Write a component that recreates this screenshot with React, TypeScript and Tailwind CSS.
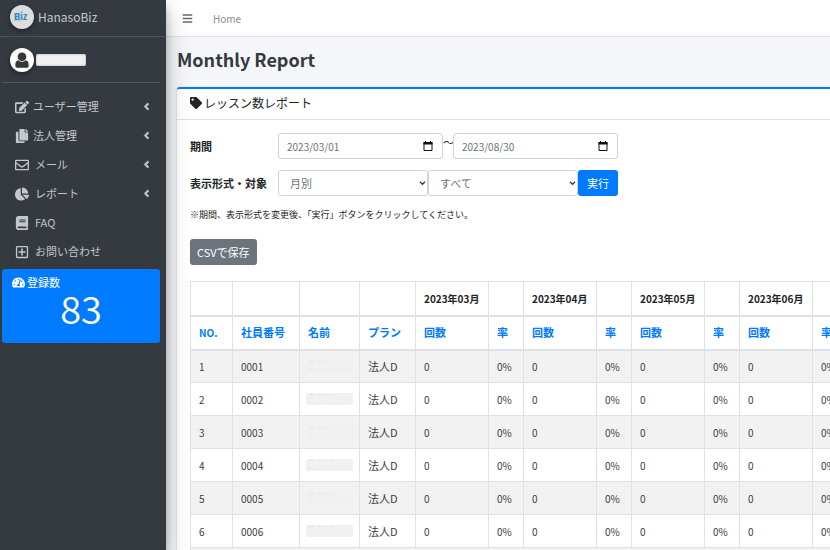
import type { IconType } from 'react-icons';
import {
  FaAngleLeft,
  FaBars,
  FaBook,
  FaChartPie,
  FaCopy,
  FaEdit,
  FaRegEnvelope,
  FaRegPlusSquare,
  FaTachometerAlt,
  FaTag,
} from 'react-icons/fa';

type NavItem = {
  label: string;
  icon: IconType;
  wide?: boolean;
  children?: boolean;
};

const navItems: NavItem[] = [
  { label: 'ユーザー管理', icon: FaEdit, children: true },
  { label: '法人管理', icon: FaCopy, children: true },
  { label: 'メール', icon: FaRegEnvelope, wide: true, children: true },
  { label: 'レポート', icon: FaChartPie, wide: true, children: true },
  { label: 'FAQ', icon: FaBook, wide: true },
  { label: 'お問い合わせ', icon: FaRegPlusSquare, wide: true },
];

const months = ['2023年03月', '2023年04月', '2023年05月', '2023年06月'];
const rows = ['0001', '0002', '0003', '0004', '0005', '0006'];

function Sidebar() {
  return (
    <aside className="relative z-10 flex w-[166px] shrink-0 flex-col bg-[#343a40] text-[11px] text-[#c2c7d0] shadow-[0_11px_23px_rgba(0,0,0,0.25),0_8px_8px_rgba(0,0,0,0.22)]">
      <a href="#" className="flex h-[37px] items-center gap-1 border-b border-[#4b545c] pb-[3px] pl-[10px] text-[12px]">
        <span className="flex size-6 items-center justify-center rounded-full bg-[#dcdddf] shadow-[0_2px_5px_rgba(0,0,0,0.4)]">
          <svg viewBox="0 0 24 24" className="size-6" aria-hidden>
            <rect x="4" y="8" width="7" height="8" fill="#a9cde8" />
            <text x="4" y="15" fontSize="9" fontWeight="700" fill="#3f83b8">
              Biz
            </text>
          </svg>
        </span>
        <span>HanasoBiz</span>
      </a>
      <div className="mr-[6px] ml-[2px] flex h-[46px] items-center gap-[2px] border-b border-[#4f5962] pl-2">
        <span className="flex size-6 items-center justify-center rounded-full bg-white shadow-[0_2px_5px_rgba(0,0,0,0.4)]">
          <svg viewBox="0 0 24 24" className="size-6" fill="#343638" aria-hidden>
            <path d="M8.2 12.3h7.6c1.8.6 2.8 2 2.8 4v1.8c0 1-.6 1.6-1.6 1.6H7c-1 0-1.6-.6-1.6-1.6v-1.8c0-2 1-3.4 2.8-4z" />
            <circle cx="12" cy="8.8" r="4.700" stroke="#fff" strokeWidth="0.8" />
          </svg>
        </span>
        <span className="h-3 w-[50px] rounded-[2px] bg-[#f0f0f0] shadow-[inset_0_0_2px_#999]" />
      </div>
      <nav className="pt-[9px]">
        <ul>
          {navItems.map(({ label, icon: Icon, wide, children }) => (
            <li key={label}>
              <a href="#" className="flex h-[29px] items-center pr-[14px] pl-[15px]">
                <Icon className={wide ? 'mr-[6px] size-[14px]' : 'mr-1 size-[14px]'} aria-hidden />
                <span>{label}</span>
                {children && <FaAngleLeft className="ml-auto size-[11px]" stroke="currentColor" strokeWidth="30" aria-hidden />}
              </a>
            </li>
          ))}
        </ul>
      </nav>
      <div className="mt-[3px] mr-[6px] ml-[2px] h-[74px] rounded-[3px] bg-[#007bff] text-white">
        <div className="flex items-center gap-[2px] pt-[5px] pl-[10px] leading-4">
          <FaTachometerAlt className="size-[13px]" aria-hidden />
          <span>登録数</span>
        </div>
        <p className="text-center text-[38px] leading-9 font-[350]">83</p>
      </div>
    </aside>
  );
}

function DateField({ id, label, value }: { id: string; label: string; value: string }) {
  return (
    <div className="relative w-[165px]">
      <input
        id={id}
        aria-label={label}
        type="text"
        defaultValue={value}
        className="block h-[26px] w-full rounded-[3px] border border-[#ced4da] bg-white pr-7 pl-2 text-[10px] text-[#6c757d]"
      />
      <svg viewBox="0 0 10 10" className="pointer-events-none absolute top-2 right-[10px] size-[10px]" fill="none" aria-hidden>
        <path d="M1 1.5h8v8H1z" stroke="#111" />
        <path d="M.5 1h9v2.5h-9zM2 0h1v1H2zM7 0h1v1H7z" fill="#111" />
      </svg>
    </div>
  );
}

function SelectField({ id, label, value }: { id: string; label: string; value: string }) {
  return (
    <div className="relative w-[150px]">
      <select
        id={id}
        aria-label={label}
        className="block h-[26px] w-full appearance-none rounded-[3px] border border-[#ced4da] bg-white pl-[11px] text-[11px] text-[#6c757d]"
      >
        <option>{value}</option>
      </select>
      <svg viewBox="0 0 8 6" className="pointer-events-none absolute top-[11px] right-[2px] h-[5px] w-[7px]" fill="none" aria-hidden>
        <path d="M1 1l3 3 3-3" stroke="#343a40" strokeWidth="1.6" />
      </svg>
    </div>
  );
}

function Filters() {
  return (
    <form>
      <div className="flex">
        <label htmlFor="from" className="w-[88px] text-[11px] leading-[26px] font-bold">
          期間
        </label>
        <DateField id="from" label="開始日" value="2023/03/01" />
        <span className="w-[10px] text-[11px] leading-[18px]">～</span>
        <DateField id="to" label="終了日" value="2023/08/30" />
      </div>
      <div className="mt-[11px] flex">
        <label htmlFor="unit" className="w-[88px] text-[11px] leading-[26px] font-bold">
          表示形式・対象
        </label>
        <SelectField id="unit" label="表示形式" value="月別" />
        <SelectField id="target" label="対象" value="すべて" />
        <button type="button" className="h-[26px] w-10 rounded-[3px] bg-[#007bff] text-[11px] text-white">
          実行
        </button>
      </div>
      <p className="mt-[11px] text-[9px] leading-4">※期間、表示形式を変更後、「実行」ボタンをクリックしてください。</p>
      <button type="button" className="mt-4 block h-[26px] rounded-[3px] bg-[#6c757d] px-[7px] text-[11px] text-white">
        CSVで保存
      </button>
    </form>
  );
}

const cell = 'border border-[#dee2e6] px-2';
const headCell = 'border border-b-2 border-[#dee2e6] px-2';

function MaskedName() {
  return (
    <span className="block h-3 rounded-[2px] bg-[#f1f1f1]">
      <svg viewBox="0 0 48 12" className="h-3 w-12" stroke="#dcdfe0" strokeWidth="0.6" fill="none" aria-hidden>
        <path d="M3 1.5h5M12 1.500h4M19 2l2-.5M26 1v2M2 10l3-1.500M12 10.500l2-1M20 9l1 1M26 10h1.500M36 9.500l3 .5" />
      </svg>
    </span>
  );
}

function ReportTable() {
  return (
    <table className="mt-4 w-[657px] table-fixed border-collapse text-left text-[10px] whitespace-nowrap">
      <colgroup>
        <col className="w-[42px]" />
        <col className="w-[67px]" />
        <col className="w-[60px]" />
        <col className="w-[56px]" />
        {months.map((m) => [<col key={m} className="w-[73px]" />, <col key={m + 'r'} className="w-[35px]" />])}
      </colgroup>
      <thead>
        <tr className="h-[34px]">
          <th className={headCell} />
          <th className={headCell} />
          <th className={headCell} />
          <th className={headCell} />
          {months.map((m) => [
            <th key={m} className={headCell}>
              {m}
            </th>,
            <th key={m + 'r'} className={headCell} />,
          ])}
        </tr>
        <tr className="h-[34px] text-[11px] text-[#007bff]">
          <th className={`${headCell} text-[10px]`}>NO.</th>
          <th className={headCell}>社員番号</th>
          <th className={headCell}>名前</th>
          <th className={headCell}>プラン</th>
          {months.map((m) => [
            <th key={m} className={headCell}>
              回数
            </th>,
            <th key={m + 'r'} className={headCell}>
              率
            </th>,
          ])}
        </tr>
      </thead>
      <tbody className="text-[#3a3e42]">
        {rows.map((no, i) => (
          <tr key={no} className="h-[33px] odd:bg-[#f2f2f2]">
            <td className={cell}>{i + 1}</td>
            <td className={cell}>{no}</td>
            <td className="border border-[#dee2e6] px-[6px]">
              <MaskedName />
            </td>
            <td className={`${cell} text-[11px]`}>法人D</td>
            {months.map((m) => [
              <td key={m} className={cell}>
                0
              </td>,
              <td key={m + 'r'} className={cell}>
                0%
              </td>,
            ])}
          </tr>
        ))}
        <tr className="h-[33px] bg-[#f2f2f2]">
          <td className={cell} colSpan={12} />
        </tr>
      </tbody>
    </table>
  );
}

export default function App() {
  return (
    <div className="flex h-screen overflow-hidden bg-[#f4f6f9] font-['Noto_Sans_CJK_JP',sans-serif] text-[#212529]">
      <Sidebar />
      <div className="min-w-0 flex-1">
        <header className="flex h-[37px] items-center border-b border-[#dee2e6] bg-white pl-4 text-[10px] text-[#8b8c8d]">
          <button type="button" aria-label="メニュー">
            <FaBars className="size-[11px] text-[#6b6c6d]" aria-hidden />
          </button>
          <a href="#" className="ml-5">
            Home
          </a>
        </header>
        <main className="pl-[11px]">
          <h1 className="pt-[10px] text-[18px] leading-6 font-bold text-[#343a40]">Monthly Report</h1>
          <section className="mt-4 rounded-tl-[3px] border-t-2 border-[#007bff] bg-white shadow-[0_0_1px_rgba(0,0,0,0.13),0_1px_3px_rgba(0,0,0,0.2)]">
            <h2 className="flex h-[31px] items-center gap-[2px] border-b border-[#dfdfdf] pb-[2px] pl-[13px] text-[12px]">
              <FaTag className="size-[12px]" aria-hidden />
              レッスン数レポート
            </h2>
            <div className="pt-[13px] pl-[13px]">
              <Filters />
              <ReportTable />
            </div>
          </section>
        </main>
      </div>
    </div>
  );
}
